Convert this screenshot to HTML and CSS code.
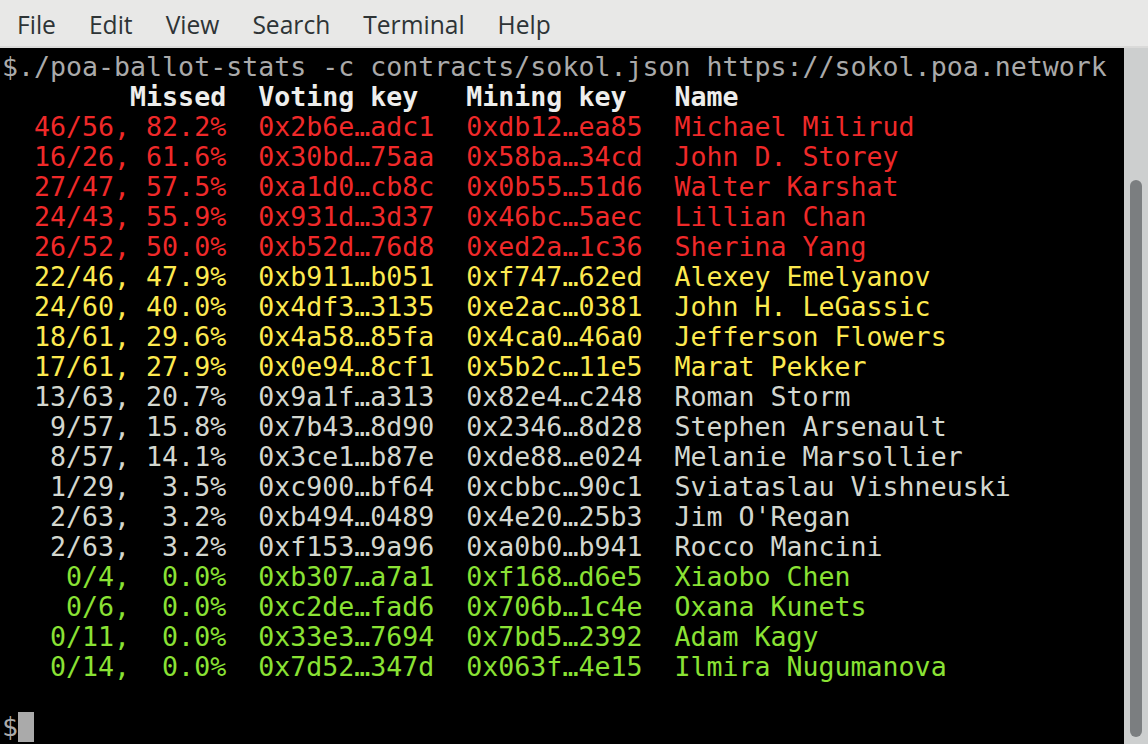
FILE: index.html
```html
<!DOCTYPE html>
<html>
<head>
<meta charset="utf-8">
<link rel="stylesheet" href="styles.css">
</head>
<body>
<div class="window">
  <nav class="menubar">
    <span class="menu">File</span>
    <span class="menu">Edit</span>
    <span class="menu">View</span>
    <span class="menu">Search</span>
    <span class="menu">Terminal</span>
    <span class="menu">Help</span>
  </nav>
  <div class="body">
    <div class="term"><div class="line cmd">$./poa-ballot-stats -c contracts/sokol.json https://sokol.poa.network</div><div class="line hdr">        Missed  Voting key   Mining key   Name</div><div class="line red">  46/56, 82.2%  0x2b6e…adc1  0xdb12…ea85  Michael Milirud</div><div class="line red">  16/26, 61.6%  0x30bd…75aa  0x58ba…34cd  John D. Storey</div><div class="line red">  27/47, 57.5%  0xa1d0…cb8c  0x0b55…51d6  Walter Karshat</div><div class="line red">  24/43, 55.9%  0x931d…3d37  0x46bc…5aec  Lillian Chan</div><div class="line red">  26/52, 50.0%  0xb52d…76d8  0xed2a…1c36  Sherina Yang</div><div class="line yel">  22/46, 47.9%  0xb911…b051  0xf747…62ed  Alexey Emelyanov</div><div class="line yel">  24/60, 40.0%  0x4df3…3135  0xe2ac…0381  John H. LeGassic</div><div class="line yel">  18/61, 29.6%  0x4a58…85fa  0x4ca0…46a0  Jefferson Flowers</div><div class="line yel">  17/61, 27.9%  0x0e94…8cf1  0x5b2c…11e5  Marat Pekker</div><div class="line gry">  13/63, 20.7%  0x9a1f…a313  0x82e4…c248  Roman Storm</div><div class="line gry">   9/57, 15.8%  0x7b43…8d90  0x2346…8d28  Stephen Arsenault</div><div class="line gry">   8/57, 14.1%  0x3ce1…b87e  0xde88…e024  Melanie Marsollier</div><div class="line gry">   1/29,  3.5%  0xc900…bf64  0xcbbc…90c1  Sviataslau Vishneuski</div><div class="line gry">   2/63,  3.2%  0xb494…0489  0x4e20…25b3  Jim O'Regan</div><div class="line gry">   2/63,  3.2%  0xf153…9a96  0xa0b0…b941  Rocco Mancini</div><div class="line grn">    0/4,  0.0%  0xb307…a7a1  0xf168…d6e5  Xiaobo Chen</div><div class="line grn">    0/6,  0.0%  0xc2de…fad6  0x706b…1c4e  Oxana Kunets</div><div class="line grn">   0/11,  0.0%  0x33e3…7694  0x7bd5…2392  Adam Kagy</div><div class="line grn">   0/14,  0.0%  0x7d52…347d  0x063f…4e15  Ilmira Nugumanova</div><div class="line"> </div><div class="line cmd">$<span class="cursor"> </span></div></div>
    <div class="scrollbar"><div class="thumb"></div></div>
  </div>
</div>
</body>
</html>
```

FILE: styles.css
```css
html, body {
  margin: 0;
  padding: 0;
  background: #000;
}
.window {
  width: 1148px;
  height: 744px;
  display: flex;
  flex-direction: column;
  overflow: hidden;
}
.menubar {
  height: 46px;
  flex: none;
  background: #e8e8e7;
  border-bottom: 2px solid #dadad9;
  display: flex;
  align-items: center;
  padding-left: 17px;
  gap: 33px;
  font-family: "Open Sans", "Noto Sans", sans-serif;
  font-size: 24.6px;
  color: #2e3436;
}
.menu {
  line-height: 46px;
  padding-top: 4px;
}
.body {
  flex: 1;
  display: flex;
  min-height: 0;
}
.term {
  flex: 1;
  background: #000;
  padding: 4px 0 0 2px;
  font-family: "DejaVu Sans Mono", monospace;
  font-size: 26.6px;
  line-height: 30px;
  color: #aaaaaa;
  white-space: pre;
  overflow: hidden;
}
.line {
  height: 30px;
}
.hdr {
  color: #eeeeec;
  font-weight: bold;
}
.red { color: #ef2929; }
.yel { color: #fce94f; }
.grn { color: #8ae234; }
.gry { color: #d3d7cf; }
.cursor {
  display: inline-block;
  width: 16px;
  height: 30px;
  background: #aaaaaa;
  vertical-align: top;
}
.scrollbar {
  width: 24px;
  flex: none;
  background: #cdcfcf;
  display: flex;
  flex-direction: column;
  padding: 132px 6px 7px 6px;
  box-sizing: border-box;
}
.thumb {
  flex: 1;
  background: #7b7e80;
  border-radius: 6px;
}
```
